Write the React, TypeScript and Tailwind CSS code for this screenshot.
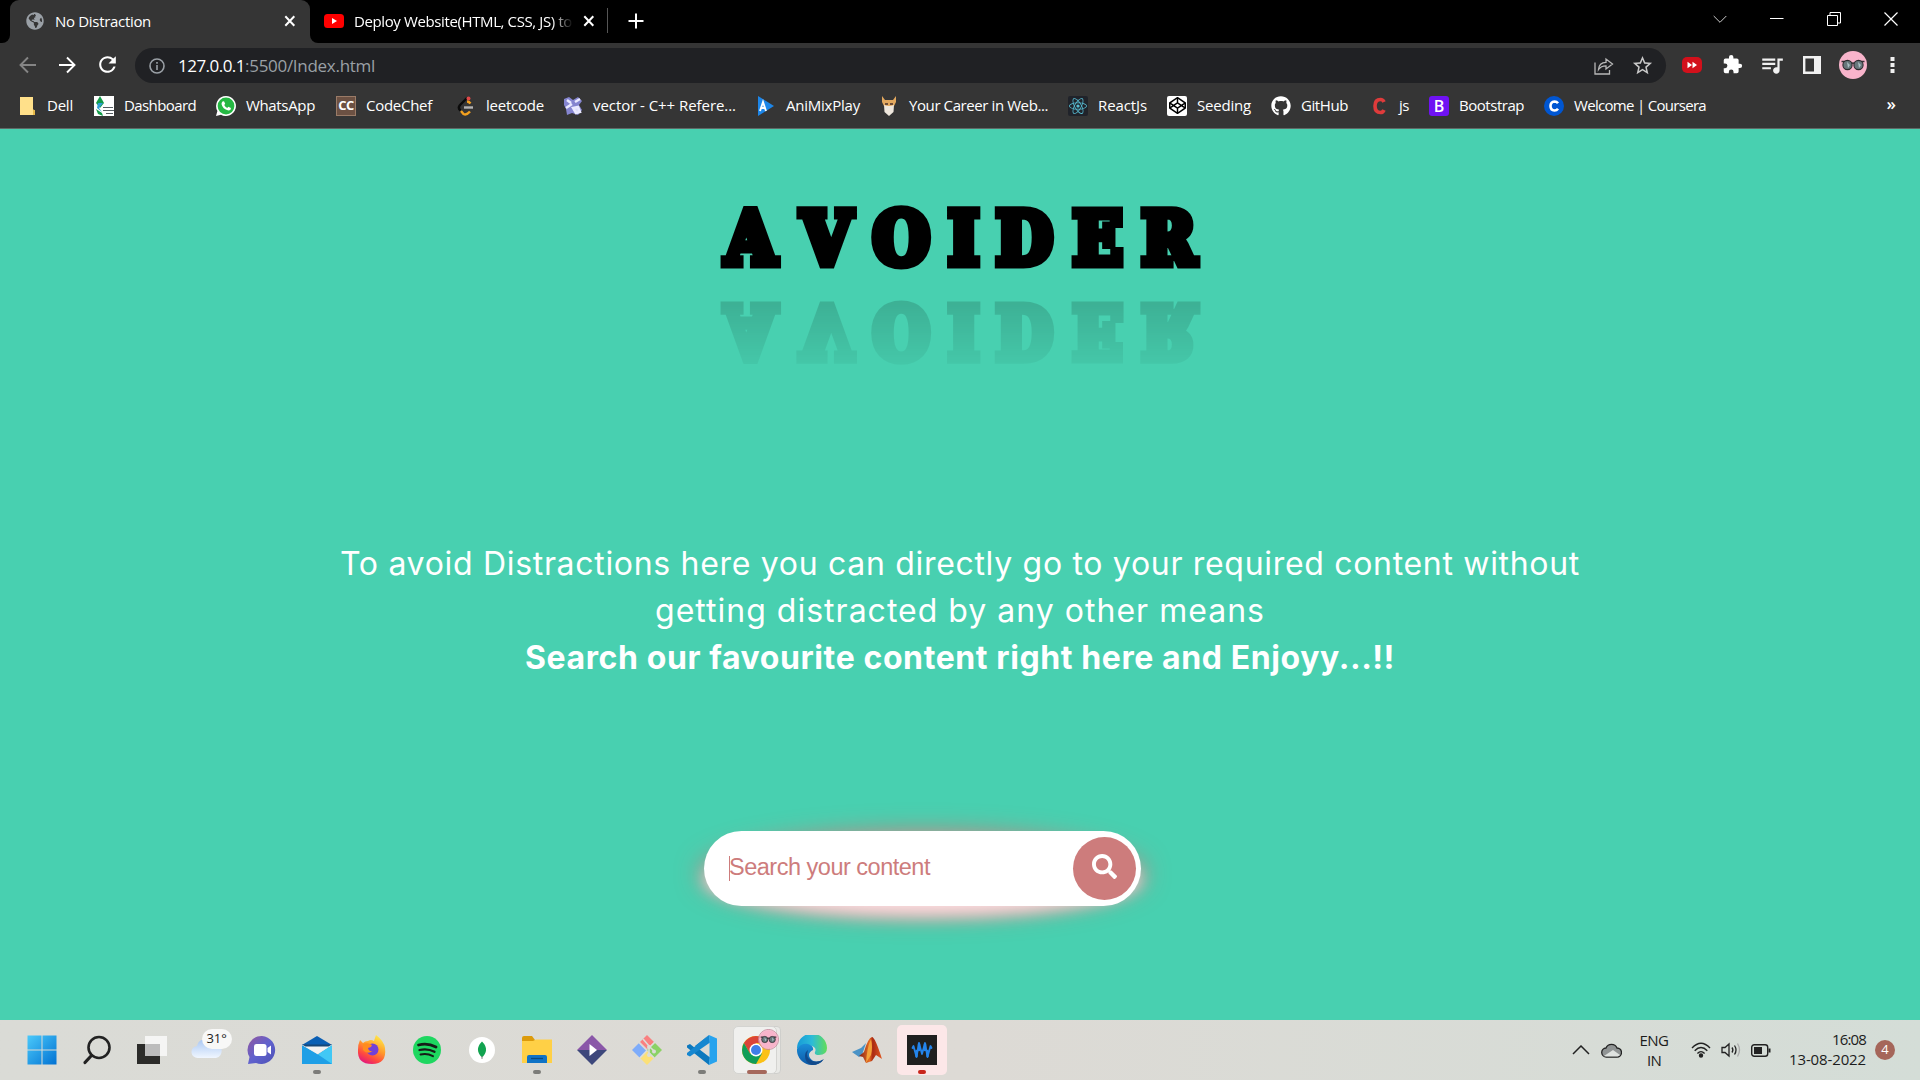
import { useLayoutEffect, useRef, useState } from "react";
import type { ReactNode } from "react";
import { FaSearch, FaWhatsapp, FaGithub, FaReact, FaCodepen, FaGlobeAmericas } from "react-icons/fa";
import { MdStarBorder, MdQueueMusic, MdRefresh } from "react-icons/md";

/* One line of text whose tracking is adjusted so that it spans `w` pixels. */
function Fit({ w, className = "", children }: { w: number; className?: string; children: string }) {
  const ref = useRef<HTMLSpanElement>(null);
  const [ls, setLs] = useState(0);
  useLayoutEffect(() => {
    const el = ref.current;
    if (!el) return;
    setLs((w - el.getBoundingClientRect().width) / children.length);
  }, []);
  return (
    <span ref={ref} className={`inline-block whitespace-pre ${className}`} style={{ letterSpacing: ls }}>
      {children}
    </span>
  );
}

const Glasses = ({ size }: { size: number }) => (
  <svg width={size} height={size} viewBox="0 0 28 28">
    <circle cx="14" cy="14" r="14" fill="#f8b4cb" />
    <path d="M2.500 10.500h4M21.500 10.500h4M12 13q2-2 4 0" stroke="#3b3338" strokeWidth="1.500" fill="none" />
    <circle cx="8.500" cy="14" r="4.600" fill="#67777b" stroke="#2c2a2d" strokeWidth="1.100" />
    <circle cx="19.500" cy="14" r="4.600" fill="#67777b" stroke="#2c2a2d" strokeWidth="1.100" />
    <path d="M8 11l3 3-2 3zM19 11l3 3-2 3z" fill="#a8bfc2" />
  </svg>
);

const Close = () => (
  <svg width="12" height="12" viewBox="0 0 12 12">
    <path d="M1.300 1.300l9 9.400M10.300 1.300l-9 9.400" stroke="#fff" strokeWidth="2" />
  </svg>
);

function TabStrip() {
  return (
    <div className="flex h-[43px] bg-black text-[15px] text-white">
      <div className="flex w-[10px] items-end bg-[#353535]">
        <div className="h-[43px] w-[10px] rounded-br-[8px] bg-black" />
      </div>
      <div className="h-[43px] w-[300px] bg-black">
        <div className="flex h-full items-center rounded-t-[9px] bg-[#353535] pb-[2px] pl-4">
          <FaGlobeAmericas size={18} color="#9aa0a6" />
          <div className="ml-[11px] w-[229px] leading-[20px]">
            <Fit w={96}>No Distraction</Fit>
          </div>
          <Close />
        </div>
      </div>
      <div className="flex w-[298px] bg-[#353535]">
        <div className="flex flex-1 items-center rounded-bl-[8px] bg-black pb-[2px] pl-[14px]">
          <svg width="20" height="14" viewBox="0 0 20 14">
            <rect width="20" height="14" rx="3.500" fill="#f00" />
            <path d="M8 4l5 3-5 3z" fill="#fff" />
          </svg>
          <div className="ml-[10px] w-[219px] leading-[20px] [mask-image:linear-gradient(to_right,black_198px,transparent_219px)]">
            <Fit w={218}>Deploy Website(HTML, CSS, JS) to</Fit>
          </div>
          <div className="ml-[10px]">
            <Close />
          </div>
          <div className="ml-auto h-[25px] w-px bg-[#555]" />
        </div>
      </div>
      <div className="flex flex-1 items-center bg-black pb-[2px] pl-[20px]">
        <svg width="16" height="16" viewBox="0 0 16 16">
          <path d="M8 .5v15M.5 8h15" stroke="#fff" strokeWidth="2" />
        </svg>
        <svg className="mb-[3px] ml-auto" width="14" height="9" viewBox="0 0 14 9">
          <path d="M.7 1l6.300 6.300L13.300 1" stroke="#ccc" fill="none" />
        </svg>
        <svg className="mb-[3px] ml-[43px]" width="14" height="14" viewBox="0 0 14 14">
          <path d="M0 6.500h13.500" stroke="#fff" />
        </svg>
        <svg className="mb-[3px] ml-[43px]" width="14" height="14" viewBox="0 0 14 14">
          <path d="M.5 3.500h10v10h-10zM3 3V.5h10.500V11H11" stroke="#fff" fill="none" />
        </svg>
        <svg className="mr-[22px] mb-[3px] ml-[43px]" width="14" height="14" viewBox="0 0 14 14">
          <path d="M.5.500l13 13M13.500.500l-13 13" stroke="#fff" strokeWidth="1.200" />
        </svg>
      </div>
    </div>
  );
}

function Toolbar() {
  return (
    <div className="flex h-[43px] items-center bg-[#353535] pl-[19px]">
      <svg width="18" height="18" viewBox="0 0 18 18">
        <path d="M17 9H2M9 1.500L1.500 9 9 16.500" stroke="#858585" strokeWidth="1.900" fill="none" />
      </svg>
      <svg className="ml-[21px]" width="18" height="18" viewBox="0 0 18 18">
        <path d="M1 9h15M9 1.500L16.500 9 9 16.500" stroke="#fff" strokeWidth="1.900" fill="none" />
      </svg>
      <MdRefresh className="ml-[19px]" size={25} color="#fff" />
      <div className="mt-[2px] ml-[15px] flex h-[35px] w-[1531px] items-center rounded-full bg-[#202124] pr-[12px] pl-[14px]">
        <svg width="16" height="16" viewBox="0 0 16 16">
          <circle cx="8" cy="8" r="7" fill="none" stroke="#9aa0a6" strokeWidth="1.600" />
          <path d="M8 7v5M8 4v1.700" stroke="#9aa0a6" strokeWidth="1.600" />
        </svg>
        <div className="ml-[13px] text-[17px] leading-[24px]">
          <Fit w={67} className="text-white">127.0.0.1</Fit>
          <Fit w={130} className="text-[#9aa0a6]">:5500/Index.html</Fit>
        </div>
        <svg className="ml-auto" width="20" height="18" viewBox="0 0 20 18">
          <path d="M1 5.500V17h14.500v-4M4.500 12.500q.5-7 7.500-7.200V2l6.500 5-6.500 5V8.800q-5 0-7.500 3.700z" stroke="#b8b8b8" strokeWidth="1.300" fill="none" />
        </svg>
        <MdStarBorder className="ml-[17px]" size={23} color="#c8c8c8" />
      </div>
      <svg className="ml-[16px]" width="20" height="16" viewBox="0 0 20 16">
        <rect width="20" height="16" rx="5" fill="#d3101b" />
        <path d="M5.500 4.800L10 8l-4.500 3.200zM10.500 4.800L15 8l-4.500 3.200z" fill="#fff" />
      </svg>
      <svg className="ml-[20px]" width="21" height="21" viewBox="0 0 24 24">
        <path d="M20.500 11H19V7a2 2 0 0 0-2-2h-4V3.500a2.500 2.500 0 0 0-5 0V5H4a2 2 0 0 0-2 2v3.800h1.500a2.700 2.700 0 0 1 0 5.400H2V20a2 2 0 0 0 2 2h3.800v-1.500a2.700 2.700 0 0 1 5.400 0V22H17a2 2 0 0 0 2-2v-4h1.500a2.500 2.500 0 0 0 0-5z" fill="#fff" />
      </svg>
      <MdQueueMusic className="ml-[16px]" size={26} color="#f1f1f1" />
      <svg className="ml-[18px]" width="18" height="18" viewBox="0 0 18 18">
        <path d="M1.200 1.200h15.600v15.600H1.200z" stroke="#f1f1f1" strokeWidth="2.400" fill="none" />
        <path d="M11 1h6v16h-6z" fill="#f1f1f1" />
      </svg>
      <div className="ml-[18px]">
        <Glasses size={28} />
      </div>
      <svg className="ml-[23px]" width="5" height="18" viewBox="0 0 5 18">
        <path d="M.5 1h4v4h-4zM.5 7h4v4h-4zM.5 13h4v4h-4z" fill="#f1f1f1" />
      </svg>
    </div>
  );
}

const bookmarks: { label: string; box: number; w: number; icon: ReactNode }[] = [
  { label: "Dell", box: 77, w: 26, icon: (
    <svg width="20" height="20" viewBox="0 0 20 20"><path d="M3 1h13v12.500l2 1V19H3z" fill="#ffe08a" /><path d="M16 13.500v5.500h2v-4.500z" fill="#e6b94a" /></svg>
  ) },
  { label: "Dashboard", box: 122, w: 72, icon: (
    <svg width="20" height="20" viewBox="0 0 20 20"><path d="M0 0h20v20H0z" fill="#fff" /><path d="M6 0l4 7-4 5-4-5z" fill="#139b49" /><path d="M4 7l5 0-4 5 3 4-5-4z" fill="#2d9fd5" /><path d="M2 13l6 4 1 3-5-2z" fill="#139b49" /><path d="M9 11h10v1H9zM9 14h11v1H9zM12 17h7v1h-7z" fill="#555d61" /></svg>
  ) },
  { label: "WhatsApp", box: 120, w: 69, icon: (
    <svg width="20" height="20" viewBox="0 0 20 20"><path d="M10 0a10 10 0 1 1-5 18.700L0 20l1.400-5A10 10 0 0 1 10 0z" fill="#fff" /><circle cx="10" cy="10" r="8.400" fill="#25b843" /><path d="M6.500 5.500l1.500-.3 1.200 2.600-1 1.200q1 2 3 3l1.200-1.200 2.500 1.200q0 2.500-2.500 2.500Q6.500 13 5.500 8q0-1.500 1-2.500z" fill="#fff" /></svg>
  ) },
  { label: "CodeChef", box: 120, w: 66, icon: (
    <div className="flex h-5 w-5 items-center justify-center border border-[#9a7b67] bg-[#6c5143] text-[13px] font-bold tracking-[-0.500px] text-white">CC</div>
  ) },
  { label: "leetcode", box: 107, w: 58, icon: (
    <svg width="20" height="20" viewBox="0 0 20 20" fill="none" strokeWidth="2.400"><path d="M11 2L4 9q-2.500 3 .5 5.500" stroke="#0b0b0b" /><path d="M11 5.500q2 0 3.500 2M5 15l2.500 3q3 1.500 6.500-2.500" stroke="#f3a11f" /><path d="M8 11.500h9" stroke="#b3b3b3" /><circle cx="12.500" cy="2.500" r="2" fill="#e04848" stroke="none" /></svg>
  ) },
  { label: "vector - C++ Refere...", box: 193, w: 143, icon: (
    <svg width="20" height="20" viewBox="0 0 20 20"><path d="M1 3l5-2 4 3 5-3 4 4-3 4 3 5-4 5-6-2-5 2-1-6-2-4z" fill="#8585d0" /><path d="M4 4l4 3M12 6l5-3M3 12l6-4M10 12l5-1 2 5-4 1z" stroke="#e9e9ff" strokeWidth="2.500" fill="#dcdcfb" /></svg>
  ) },
  { label: "AniMixPlay", box: 123, w: 74, icon: (
    <svg width="20" height="20" viewBox="0 0 20 20"><path d="M2 0l16 10L2 20z" fill="#1d86e8" /><path d="M4 15L7 6l3 9M5 12h4" stroke="#fff" strokeWidth="1.900" fill="none" /></svg>
  ) },
  { label: "Your Career in Web...", box: 189, w: 139, icon: (
    <svg width="20" height="20" viewBox="0 0 20 20"><path d="M3 0l3 4h8l3-4 0 6-2 4H5L3 6z" fill="#e2a85e" /><path d="M5 9q5 2 10 0l-.5 7-4.500 4-4.500-4z" fill="#eee7dd" /><path d="M6 7h3v2H6zM11 7h3v2h-3z" fill="#6e4d36" /></svg>
  ) },
  { label: "ReactJs", box: 99, w: 49, icon: (
    <div className="flex h-5 w-5 items-center justify-center rounded-[2px] bg-[#20232a]"><FaReact size={18} color="#57bcd2" /></div>
  ) },
  { label: "Seeding", box: 104, w: 54, icon: (
    <div className="flex h-5 w-5 items-center justify-center rounded-[2px] bg-white"><FaCodepen size={17} color="#000" /></div>
  ) },
  { label: "GitHub", box: 98, w: 47, icon: <FaGithub size={20} color="#fff" /> },
  { label: "js", box: 60, w: 10, icon: (
    <svg width="20" height="20" viewBox="0 0 20 20"><path d="M15 6Q14 3.500 11.500 3.500Q6 3.500 6 10T11.500 16.500Q14 16.500 15 14" stroke="#df3b3b" strokeWidth="3.600" fill="none" /></svg>
  ) },
  { label: "Bootstrap", box: 115, w: 65, icon: (
    <div className="flex h-5 w-5 items-center justify-center rounded-[3px] bg-[#6f12f3] text-[16px] font-semibold text-white">B</div>
  ) },
  { label: "Welcome | Coursera", box: 170, w: 132, icon: (
    <svg width="20" height="20" viewBox="0 0 20 20"><circle cx="10" cy="10" r="10" fill="#0056d2" /><path d="M14 7.300Q12.700 5.500 10.500 5.500Q6.500 5.800 6.500 10T10.500 14.500Q12.700 14.500 14 12.700" stroke="#fff" strokeWidth="2.600" fill="none" /></svg>
  ) },
];

function Bookmarks() {
  return (
    <div className="flex h-[43px] items-center border-b border-[#5d6a66] bg-[#353535] pb-[3px] pl-[17px] text-[15px] text-white">
      {bookmarks.map((b) => (
        <div key={b.label} className="flex shrink-0 items-center gap-[10px]" style={{ width: b.box }}>
          <div className="h-5 w-5 shrink-0">{b.icon}</div>
          <Fit w={b.w} className="pb-px leading-[20px]">{b.label}</Fit>
        </div>
      ))}
      <span className="mr-[24px] ml-auto pb-1 text-[17px] font-semibold">»</span>
    </div>
  );
}

function Page() {
  return (
    <main className="flex h-[891px] flex-col items-center bg-[#48d0b0]">
      <h1 className="mt-[54px] ml-px h-[112px] px-3 font-['DejaVu_Serif_Condensed','DejaVu_Serif'] text-[72px] leading-[112px] font-bold text-black [-webkit-box-reflect:below_-20px_linear-gradient(transparent,#0003)] [-webkit-text-stroke:9px_black] [font-kerning:none] [font-stretch:condensed]">
        <span className="tracking-[25.500px]">A</span>
        <span className="tracking-[21.500px]">V</span>
        <span className="tracking-[19px]">O</span>
        <span className="tracking-[17.500px]">I</span>
        <span className="tracking-[20.500px]">D</span>
        <span className="tracking-[19.500px]">E</span>
        <span>R</span>
      </h1>
      <div className="mt-[245px] flex flex-col items-center font-['Inter'] text-[32px] leading-[47px] text-white">
        <Fit w={1240}>To avoid Distractions here you can directly go to your required content without</Fit>
        <Fit w={610}>getting distracted by any other means</Fit>
        <Fit w={870} className="font-bold">Search our favourite content right here and Enjoyy...!!</Fit>
      </div>
      <div className="relative mt-[150px] mr-[75px] h-[75px] w-[437px]">
        <div className="absolute inset-0 rounded-[50%] shadow-[0_11px_16px_#fbdcdf,0_5px_26px_3px_#d07878]" />
        <div className="relative flex h-full items-center rounded-full bg-white pr-[5px] pl-[25px]">
          <span className="-mr-px h-[25px] w-px bg-[#cd7c7c]" />
          <Fit w={201} className="pb-[3px] font-['Liberation_Sans'] text-[23.500px] leading-[28px] text-[#cd7c7c]">Search your content</Fit>
          <button className="ml-auto flex h-[63px] w-[63px] items-center justify-center rounded-full bg-[#cd7c7c] pb-1">
            <FaSearch size={25} color="#fff" />
          </button>
        </div>
      </div>
    </main>
  );
}

const Win = () => (
  <svg width="30" height="30" viewBox="0 0 30 30">
    <defs><linearGradient id="win" gradientUnits="userSpaceOnUse" x1="0" y1="0" x2="30" y2="30"><stop stopColor="#4ccbfb" /><stop offset="1" stopColor="#0070d2" /></linearGradient></defs>
    <path d="M.5.500h14v14H.5zM15.500.500h14v14h-14zM.5 15.500h14v14H.5zM15.500 15.500h14v14h-14z" fill="url(#win)" />
  </svg>
);
const Search = () => (
  <svg width="30" height="30" viewBox="0 0 30 30" fill="none" stroke="#222">
    <circle cx="17" cy="12.500" r="10.500" strokeWidth="2.600" /><path d="M9.500 20.500L3 27.500" strokeWidth="3.200" strokeLinecap="round" />
  </svg>
);
const TaskView = () => (
  <svg width="32" height="30" viewBox="0 0 32 30">
    <path d="M1 9h23v20H1z" fill="#2b2b29" /><path d="M9 1h22v20H9z" fill="#f7f7f7" opacity=".9" /><path d="M9 9h15v12H9z" fill="#bcbcbc" />
  </svg>
);
const Weather = () => (
  <div className="relative h-[30px] w-[34px]">
    <svg className="mt-[5px]" width="34" height="20" viewBox="0 0 34 20">
      <defs><linearGradient id="cloud" x2="0" y2="1"><stop stopColor="#a9c7f3" /><stop offset="1" stopColor="#f0f6ff" /></linearGradient></defs>
      <path d="M8 18a6 6 0 0 1-1-12 8.500 8.500 0 0 1 16-2 7 7 0 0 1 3 14z" fill="url(#cloud)" />
    </svg>
    <div className="absolute -top-[6px] left-[12px] flex h-[20px] w-[30px] items-center justify-center rounded-full bg-[#f8f8f7] text-[13px] text-[#222]">31°</div>
  </div>
);
const Chat = () => (
  <svg width="30" height="30" viewBox="0 0 30 30">
    <defs><linearGradient id="chat" x2="1" y2="1"><stop stopColor="#93579e" /><stop offset=".5" stopColor="#6062ce" /><stop offset="1" stopColor="#4d51b5" /></linearGradient></defs>
    <path d="M15 1a14 14 0 1 1-6 27L1 29l1.500-7A14 14 0 0 1 15 1z" fill="url(#chat)" /><rect x="7" y="9" width="12.500" height="12" rx="2.500" fill="#fff" /><path d="M20.500 13l3.500-2.500v9L20.500 17z" fill="#fff" />
  </svg>
);
const Mail = () => (
  <svg width="30" height="30" viewBox="0 0 30 30">
    <path d="M0 10L15 1l15 9z" fill="#0a5fb4" /><path d="M0 10l16 9.500L30 10v19H0z" fill="#1f9fe6" /><path d="M30 10v19L16 19.500z" fill="#41c8f5" /><path d="M0 10h30L15.500 19z" fill="#f2f2f2" /><path d="M0 9.500h30l-3.500 2H3.500z" fill="#164777" />
  </svg>
);
const Firefox = () => (
  <svg width="30" height="30" viewBox="0 0 30 30">
    <defs><linearGradient id="ff" x1=".8" y1="0" x2=".3" y2="1"><stop stopColor="#fff04c" /><stop offset=".45" stopColor="#ff9a2b" /><stop offset=".75" stopColor="#ff4b3e" /><stop offset="1" stopColor="#e3177d" /></linearGradient></defs>
    <path d="M3 5l3 3q2-2 5-2 3-2 6 0l2-6q8 6 9 13 2 16-13 16T1 15Q1 9 3 5z" fill="url(#ff)" /><circle cx="15.500" cy="14.500" r="6" fill="#7140d8" /><path d="M6 9q5-2 9 1l-1 2-3 1q1 4 5 3-6 4-10-1z" fill="#ff8b1e" />
  </svg>
);
const Spotify = () => (
  <svg width="28" height="28" viewBox="0 0 28 28" fill="none" stroke="#161c18" strokeLinecap="round">
    <circle cx="14" cy="14" r="14" fill="#1ed760" stroke="none" /><path d="M5.500 9q9-2.500 17.500 2" strokeWidth="2.800" /><path d="M6.500 14q8-2 15 1.800" strokeWidth="2.300" /><path d="M7.500 18.500q6.500-1.700 12.500 1.700" strokeWidth="1.900" />
  </svg>
);
const Mongo = () => (
  <svg width="26" height="26" viewBox="0 0 26 26">
    <circle cx="13" cy="13" r="13" fill="#fff" /><path d="M13 4.500q8 8 0 16-8-8 0-16z" fill="#12a350" /><path d="M13 19v3" stroke="#888" />
  </svg>
);
const Folder = () => (
  <svg width="30" height="28" viewBox="0 0 30 28">
    <path d="M0 2q0-2 2-2h8l3 4h15q2 0 2 2v6H0z" fill="#dc9b0c" /><path d="M0 5h11l3-1.500h16V27H0z" fill="#ffd046" /><path d="M5 27v-6q0-2 2-2h16q2 0 2 2v6z" fill="#1073c6" /><path d="M9 22.500h12" stroke="#0a4a80" strokeWidth="1.300" />
  </svg>
);
const Purple = () => (
  <svg width="30" height="30" viewBox="0 0 30 30">
    <path d="M15 0l15 15H0z" fill="#8a57a8" /><path d="M0 15h30L15 30z" fill="#3d477b" /><path d="M12.500 9l7.500 6-7.500 6z" fill="#fff" />
  </svg>
);
const Git = () => (
  <svg width="30" height="30" viewBox="0 0 30 30">
    <path d="M15 0l7 7-7 7-7-7z" fill="#f98080" /><path d="M7.500 7.500L15 15l-7.500 7.500L0 15z" fill="#7eacfa" /><path d="M22.500 7.500L30 15l-7.500 7.500L15 15z" fill="#8bd265" /><path d="M15 16l7 7-7 7-7-7z" fill="#fbe078" /><path d="M11 4L17 11v10M17 11l5 5M7 7.500l8 8M23 7l-6 6M8 23l7-7.500M22 23l-5-5" stroke="#dcdcd8" strokeWidth="1.600" fill="none" /><circle cx="17" cy="12" r="2" fill="#dcdcd8" /><circle cx="17" cy="20" r="2" fill="#dcdcd8" /><circle cx="22" cy="16.500" r="2" fill="#dcdcd8" />
  </svg>
);
const VsCode = () => (
  <svg width="30" height="30" viewBox="0 0 30 30">
    <path d="M22 0L8 13 3 9 0 10.500v2L22 30l1-7.500L8 11z" fill="#0b78be" /><path d="M22 0L0 18v2l3 1.500L23 7.500z" fill="#1687d0" /><path d="M22 0l8 3.500v23L22 30l.500-6V7z" fill="#27a3ee" />
  </svg>
);
const Chrome = () => (
  <div className="relative flex h-[48px] w-[48px] items-center">
    <div className="absolute inset-y-0 right-0 w-[12px] rounded-[4px] border border-[#cfcfcc] bg-[#e9e9e6]" />
    <div className="relative flex h-[48px] w-[44px] items-center justify-center rounded-[5px] border border-[#d4d4d1] bg-[#f0f0ee]">
      <svg className="ml-[2px]" width="28" height="28" viewBox="0 0 28 28">
        <circle cx="14" cy="14" r="14" fill="#fbc116" />
        <path d="M1.900 7A14 14 0 0 1 26.100 7H14L8 17.500z" fill="#db4437" />
        <path d="M1.900 7L8 17.500h12L14 28A14 14 0 0 1 1.900 7z" fill="#109d58" />
        <circle cx="14" cy="14" r="6.500" fill="#fff" /><circle cx="14" cy="14" r="5" fill="#3e7ee8" />
      </svg>
    </div>
    <div className="absolute top-[3px] left-[25px] rounded-full border border-[#c9889c]">
      <Glasses size={19} />
    </div>
  </div>
);
const Edge = () => (
  <svg width="30" height="30" viewBox="0 0 30 30">
    <defs>
      <linearGradient id="eg" x2="1"><stop stopColor="#179bd8" /><stop offset=".5" stopColor="#2cbbd8" /><stop offset="1" stopColor="#62dd58" /></linearGradient>
      <linearGradient id="eb" x2="0" y2="1"><stop stopColor="#1b8fd8" /><stop offset="1" stopColor="#0c59a8" /></linearGradient>
    </defs>
    <path d="M0 14A15 15 0 0 1 30 13q0 7-8 7-5 0-4-3 2-4-3-6Q6 8 0 14z" fill="url(#eg)" /><path d="M0 14q4-6 11-5 6 2 5 6-6 3-3 8 4 6 13 2-4 5-11 5A15 15 0 0 1 0 14z" fill="url(#eb)" /><path d="M11 15q-3 8 4 11 6 2 12-2-4 6-12 6-7-2-7-9 0-4 3-6z" fill="#114a8b" />
  </svg>
);
const Matlab = () => (
  <svg width="30" height="28" viewBox="0 0 30 28">
    <defs><linearGradient id="ml" x2="1"><stop stopColor="#7b1c16" /><stop offset=".45" stopColor="#e86c21" /><stop offset=".6" stopColor="#a92a14" /><stop offset="1" stopColor="#e35a22" /></linearGradient></defs>
    <path d="M0 16l9-4 5-5-4 12-3 2z" fill="#4b93c6" /><path d="M7 20l5-4Q16 2 20 1q3 0 10 22l-6-4-4 6-6 2-3-6z" fill="url(#ml)" /><path d="M19 3q2 8 0 16l-5 8q1-16 5-24z" fill="#f3a23a" />
  </svg>
);
const Wave = () => (
  <div className="flex h-[50px] w-[50px] items-center justify-center rounded-[5px] bg-[#fce7e8]">
    <svg width="30" height="30" viewBox="0 0 30 30" fill="none" stroke="#2484ec" strokeLinejoin="round" strokeLinecap="round">
      <path d="M0 0h30v30H0z" fill="#1f1f1f" stroke="none" />
      <path d="M5.500 13L6.500 11L9.500 22L12 8L15 19L18 8L20.500 22L23.500 11L24.500 13" strokeWidth="1.800" />
      <path d="M9.500 16v5M12 9v6M18 9v6M20.500 16v5" strokeWidth="2.400" />
    </svg>
  </div>
);

const apps: { icon: ReactNode; mark?: "dot" | "active" | "alert" }[] = [
  { icon: <Win /> }, { icon: <Search /> }, { icon: <TaskView /> }, { icon: <Weather /> }, { icon: <Chat /> },
  { icon: <Mail />, mark: "dot" }, { icon: <Firefox /> }, { icon: <Spotify /> }, { icon: <Mongo /> },
  { icon: <Folder />, mark: "dot" }, { icon: <Purple /> }, { icon: <Git /> }, { icon: <VsCode />, mark: "dot" },
  { icon: <Chrome />, mark: "active" }, { icon: <Edge /> }, { icon: <Matlab /> }, { icon: <Wave />, mark: "alert" },
];

const marks = {
  dot: "w-2 bg-[#7c7c79]",
  active: "w-5 bg-[#a5685c]",
  alert: "w-2 bg-[#c8251b]",
};

function Taskbar() {
  return (
    <footer className="flex h-[60px] items-center bg-gradient-to-r from-[#dadbd6] via-[#dddad5] to-[#d4ddd7] pl-[14px] text-[#1c1c1c]">
      {apps.map((a, i) => (
        <div key={i} className="relative flex h-[60px] w-[55.050px] items-center justify-center">
          {a.icon}
          {a.mark && <span className={`absolute bottom-[6px] h-[4px] rounded-full ${marks[a.mark]}`} />}
        </div>
      ))}
      <div className="ml-auto flex items-center">
        <svg width="18" height="10" viewBox="0 0 18 10"><path d="M1 9l8-8 8 8" stroke="#222" strokeWidth="1.500" fill="none" /></svg>
        <svg className="ml-[11px]" width="21" height="15" viewBox="0 0 21 15">
          <path d="M5.500 14a4.500 4.500 0 0 1-.5-9A6 6 0 0 1 16 5a4.500 4.500 0 0 1 0 9z" fill="#909494" stroke="#222" strokeWidth="1.300" /><path d="M3 13l9-6 7 5-2 1.500H5z" fill="#dfe3e0" />
        </svg>
        <div className="ml-[17px] flex w-[30px] flex-col items-center text-[15px] leading-[20px]">
          <Fit w={29}>ENG</Fit>
          <Fit w={14}>IN</Fit>
        </div>
        <svg className="ml-[22px]" width="20" height="16" viewBox="0 0 20 16" fill="none" stroke="#222" strokeWidth="1.400">
          <path d="M1 6q9-9.500 18 0M3.700 8.800q6.300-6.500 12.600 0M6.400 11.500q3.600-3.800 7.200 0" /><circle cx="10" cy="13.500" r="1.500" fill="#222" />
        </svg>
        <svg className="ml-[10px]" width="20" height="16" viewBox="0 0 20 16" fill="none" stroke="#222" strokeWidth="1.300">
          <path d="M1 5.500h3L8 2v12l-4-3.500H1zM11 5.500q1.800 2.500 0 5M13.500 3.500q3 4.500 0 9" /><path d="M16.500 1.500q4 6.500 0 13" stroke="#aaa" />
        </svg>
        <svg className="ml-[10px]" width="20" height="13" viewBox="0 0 20 13">
          <rect x=".7" y=".7" width="16" height="11.600" rx="2.500" fill="none" stroke="#222" strokeWidth="1.400" /><path d="M3 3h8v7H3zM17.500 4.500h2v4h-2z" fill="#222" />
        </svg>
        <div className="ml-[18px] flex w-[77px] flex-col items-end pb-[2px] text-[15px] leading-[20px]">
          <Fit w={34}>16:08</Fit>
          <Fit w={77}>13-08-2022</Fit>
        </div>
        <div className="mr-[25px] ml-[9px] flex h-5 w-5 items-center justify-center rounded-full bg-[#a5665a] text-[13px] text-white">4</div>
      </div>
    </footer>
  );
}

export default function App() {
  return (
    <div className="flex h-[1080px] w-[1920px] flex-col overflow-hidden font-['Open_Sans','Noto_Sans',sans-serif]">
      <TabStrip />
      <Toolbar />
      <Bookmarks />
      <Page />
      <Taskbar />
    </div>
  );
}
